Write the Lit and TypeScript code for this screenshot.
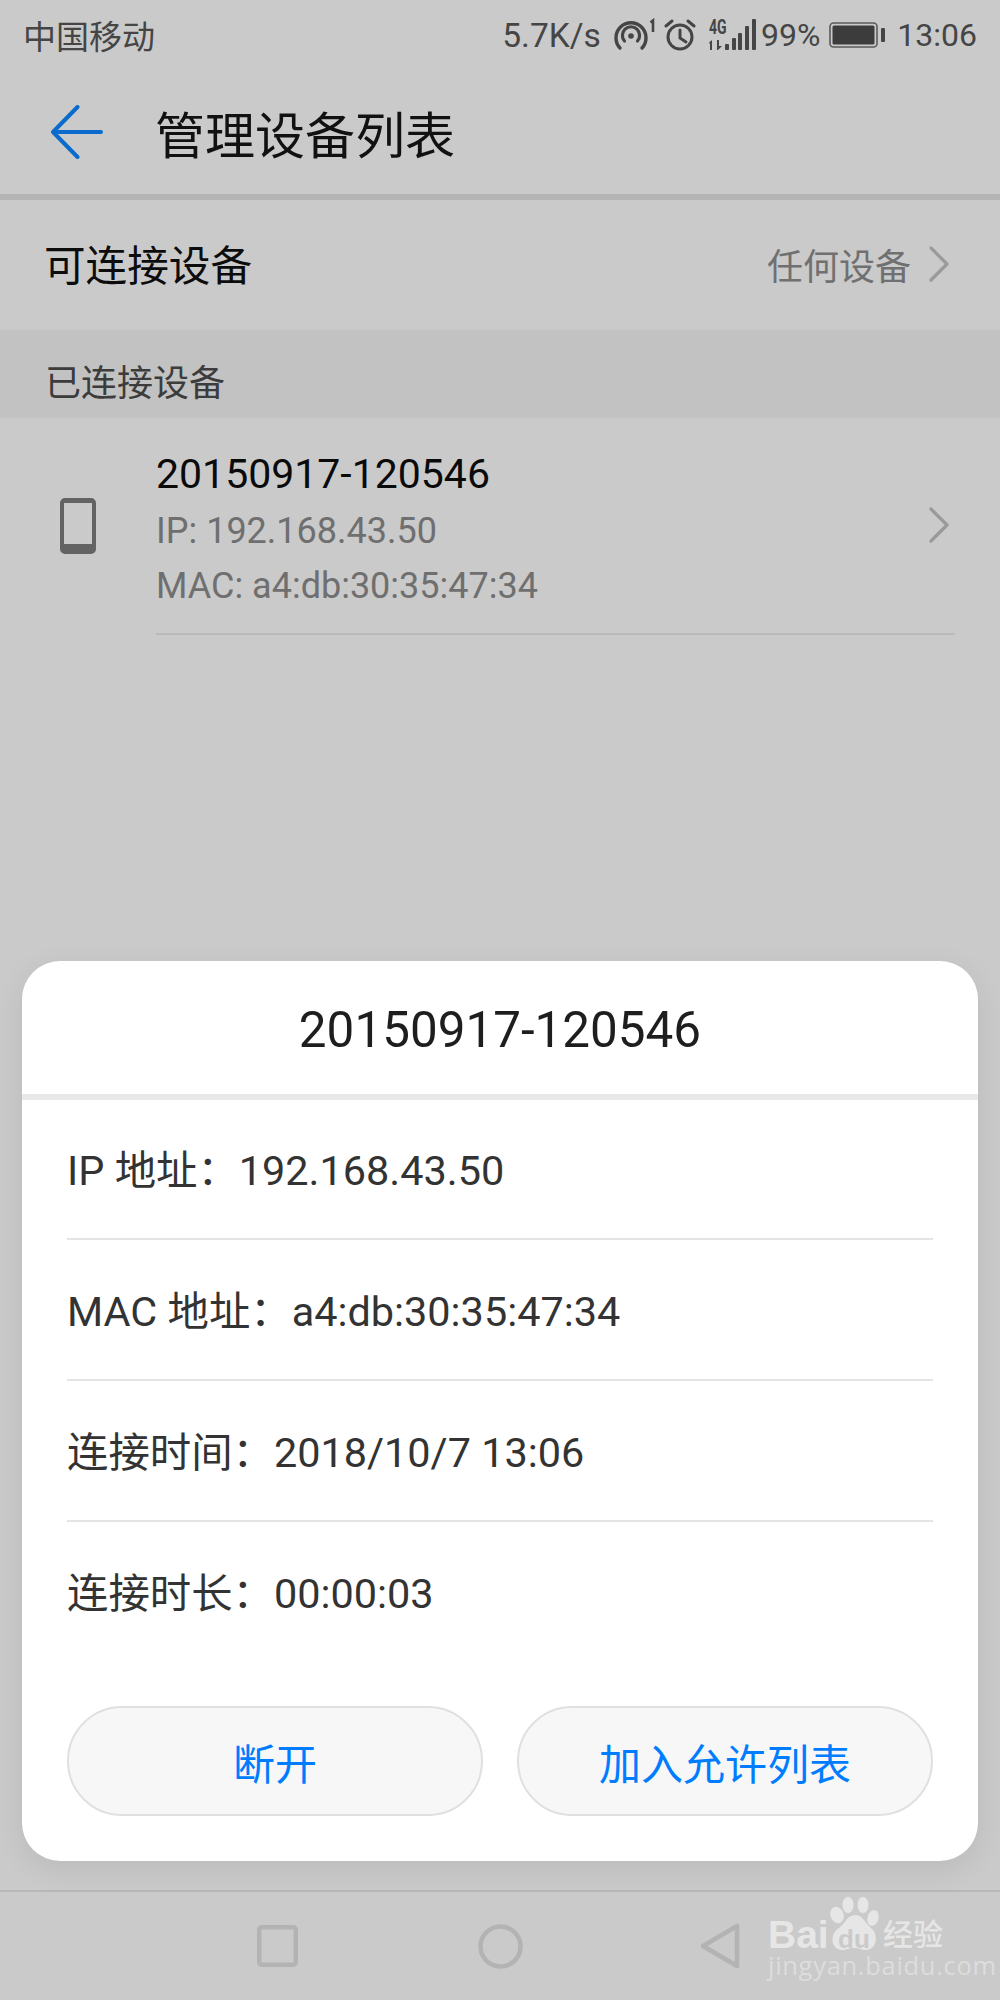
import { LitElement, html, css } from "lit";
import { customElement } from "lit/decorators.js";

@customElement("app-root")
export class AppRoot extends LitElement {
  static styles = css`
    :host { display: block; }
    * { box-sizing: border-box; }
    .page { position: relative; width: 1000px; height: 2000px; background: #cacaca; overflow: hidden; display: flex; flex-direction: column; font-family: Roboto, "Noto Sans CJK SC", sans-serif; color: #111; }
    svg { display: block; flex: none; }
    .status { height: 70px; display: flex; align-items: center; padding: 0 23px 0 23px; font-size: 32px; color: #454545; }
    .carrier { font-size: 33px; flex: 1; }
    .speed { font-size: 33.5px; margin-right: 12px; }
    .hot { margin-right: 7px; }
    .alarm { margin-right: 11px; }
    .net { position: relative; width: 50px; height: 34px; margin-right: 4px; }
    .g4 { position: absolute; left: 2px; top: 0; font-size: 20px; font-weight: 700; line-height: 18px; transform: scaleX(.7); transform-origin: left top; }
    .net svg { position: absolute; left: 0; top: 0; }
    .pct { margin-right: 9px; }
    .batt { margin-right: 11px; }
    .bar { height: 124px; display: flex; align-items: center; padding-left: 51px; gap: 50px; font-size: 50px; }
    .bar-rule { height: 6px; background: #b5b5b5; }
    .any { height: 130px; display: flex; align-items: center; padding: 0 51px 0 44px; font-size: 41.6px; color: #0c0c0c; }
    .any .lbl { flex: 1; position: relative; top: -2px; }
    .any .val { font-size: 36px; color: #707070; margin-right: 18px; position: relative; top: -1px; }
    .any svg { position: relative; top: -1px; }
    .band { height: 88px; background: #c2c2c2; display: flex; align-items: flex-end; padding: 0 0 12px 45px; font-size: 36px; line-height: 44px; color: #3c3c3c; }
    .dev { height: 217px; display: flex; align-items: center; padding-left: 60px; position: relative; }
    .dev-ph { margin-top: -2px; margin-right: 60px; }
    .dev-body { flex: 1; align-self: stretch; margin-right: 45px; border-bottom: 2px solid #bababa; padding-top: 32px; display: flex; align-items: stretch; }
    .dev-txt { flex: 1; }
    .dev-name { font-size: 41px; line-height: 48px; color: #0a0a0a; }
    .dev-sub { font-size: 36px; line-height: 55px; color: #6f6f6f; }
    .dev-sub.first { margin-top: 6px; }
    .dev-chev { align-self: center; margin-right: 6px; margin-top: -34px; }
    .spacer { flex: 1; }
    .nav { height: 110px; border-top: 2px solid #b8b8b8; display: flex; align-items: center; }
    .nav-sq { margin-left: 257px; }
    .nav-ci { margin-left: 180px; }
    .nav-tr { margin-left: 177px; }
    .dialog { position: absolute; left: 22px; top: 961px; width: 956px; height: 900px; background: #fff; border-radius: 38px; box-shadow: 0 8px 30px rgba(0,0,0,.08); display: flex; flex-direction: column; }
    .d-title { height: 133px; display: flex; align-items: center; justify-content: center; font-size: 49.4px; color: #1e1e1e; padding-top: 4px; }
    .d-rule { height: 6px; background: #e8e8e8; }
    .d-list { padding: 0 45px; }
    .d-row { height: 141px; display: flex; align-items: center; font-size: 41.4px; color: #333; border-bottom: 2px solid #e4e4e4; padding-bottom: 4px; }
    .d-row:first-child { height: 140px; padding-bottom: 5px; }
    .d-row:last-child { border-bottom: 0; padding-bottom: 6px; }
    .d-btns { display: flex; gap: 34px; padding: 43px 45px 0 45px; }
    .d-btn { flex: 1; height: 110px; border-radius: 55px; background: #f7f7f7; border: 2px solid #e0e0e0; color: #007dff; font-size: 42px; display: flex; align-items: center; justify-content: center; }
    .mark { position: absolute; left: 768px; top: 1892px; width: 190px; height: 96px; color: #e6e6e6; }
    .mk-bai { position: absolute; left: 0; top: 28px; font-family: "Liberation Sans", sans-serif; font-weight: 700; font-size: 39px; line-height: 30px; }
    .mk-du { position: absolute; left: 70px; top: 35px; font-family: "Liberation Sans", sans-serif; font-weight: 700; font-size: 26px; line-height: 24px; color: #cacaca; }
    .mk-jy { position: absolute; left: 115px; top: 28px; font-size: 30px; line-height: 30px; font-weight: 500; white-space: nowrap; }
    .mk-url { position: absolute; left: 0; top: 61px; font-family: "Open Sans", sans-serif; font-size: 25.5px; line-height: 24px; letter-spacing: .7px; color: #dddddd; white-space: nowrap; }
    .paw { position: absolute; left: 62px; top: 3px; }
  `;

  private chevron() {
    return html`<svg width="20" height="36" viewBox="0 0 20 36" fill="none" stroke="#9a9a9a" stroke-width="3.2" stroke-linecap="round" stroke-linejoin="round"><path d="M2 2 L18 18 L2 34" /></svg>`;
  }

  render() {
    return html`<div class="page">
      <div class="status">
        <span class="carrier">中国移动</span>
        <span class="speed">5.7K/s</span>
        <svg class="hot" width="44" height="34" viewBox="0 0 44 34" fill="none" stroke="#454545" stroke-linecap="round">
          <path d="M7 30 A15 15 0 1 1 29 30" stroke-width="3.4" />
          <path d="M11.5 23 A8.6 8.6 0 1 1 24.5 23" stroke-width="3.2" />
          <circle cx="18" cy="18" r="2.8" fill="#454545" stroke="none" />
          <path d="M37.5 4.5 L40 2.5 V14" stroke-width="2.6" stroke-linecap="butt" />
        </svg>
        <svg class="alarm" width="32" height="32" viewBox="0 0 32 32" fill="none" stroke="#454545" stroke-width="3" stroke-linecap="round" stroke-linejoin="round">
          <circle cx="16" cy="18" r="12" />
          <path d="M16 11 V19 L22 23" />
          <path d="M2 7 L8 2 M30 7 L24 2" />
        </svg>
        <div class="net">
          <svg width="50" height="34" viewBox="0 0 50 34" fill="#454545">
            <path d="M2 24.5 L5 22 V32 H3 V26 Z M10 22 H12 V28 H15 L11 32 H10 Z" />
            <rect x="18" y="26" width="4" height="6" rx="1" />
            <rect x="25" y="20" width="4" height="12" rx="1" />
            <rect x="31" y="15" width="4" height="17" rx="1" />
            <rect x="38" y="8" width="4" height="24" rx="1" />
            <rect x="45" y="1" width="4" height="31" rx="1" />
          </svg>
          <span class="g4">4G</span>
        </div>
        <span class="pct">99%</span>
        <svg class="batt" width="57" height="26" viewBox="0 0 57 26" fill="#454545">
          <rect x="1" y="1" width="47" height="24" rx="3.5" fill="none" stroke="#5a5a5a" stroke-width="1.6" />
          <rect x="3.5" y="3.5" width="42" height="19" rx="1.5" fill="#3c3c3c" />
          <rect x="52" y="6" width="4" height="14" rx="1" />
        </svg>
        <span>13:06</span>
      </div>
      <div class="bar">
        <svg width="54" height="54" viewBox="0 0 54 54" fill="none" stroke="#0a6bcc" stroke-width="4" stroke-linecap="round" stroke-linejoin="round"><path d="M2 27 H50 M26.5 2 L2 27 L26.5 52" /></svg>
        <span>管理设备列表</span>
      </div>
      <div class="bar-rule"></div>
      <div class="any">
        <span class="lbl">可连接设备</span>
        <span class="val">任何设备</span>
        ${this.chevron()}
      </div>
      <div class="band">已连接设备</div>
      <div class="dev">
        <svg class="dev-ph" width="36" height="56" viewBox="0 0 36 56"><path fill="#636363" fill-rule="evenodd" d="M5 0 H31 A5 5 0 0 1 36 5 V51 A5 5 0 0 1 31 56 H5 A5 5 0 0 1 0 51 V5 A5 5 0 0 1 5 0 Z M4 5 V46 H32 V5 Z" /></svg>
        <div class="dev-body">
          <div class="dev-txt">
            <div class="dev-name">20150917-120546</div>
            <div class="dev-sub first">IP: 192.168.43.50</div>
            <div class="dev-sub">MAC: a4:db:30:35:47:34</div>
          </div>
          <span class="dev-chev">${this.chevron()}</span>
        </div>
      </div>
      <div class="spacer"></div>
      <div class="nav">
        <svg class="nav-sq" width="41" height="42" viewBox="0 0 41 42" fill="none" stroke="#b3b3b3" stroke-width="4.5"><rect x="2.25" y="2.25" width="36.5" height="37.5" rx="2.5" /></svg>
        <svg class="nav-ci" width="45" height="45" viewBox="0 0 45 45" fill="none" stroke="#b3b3b3" stroke-width="4.5"><circle cx="22.5" cy="22.5" r="20" /></svg>
        <svg class="nav-tr" width="40" height="46" viewBox="0 0 40 46" fill="none" stroke="#b3b3b3" stroke-width="4.5" stroke-linejoin="round"><path d="M37 3 V43 L3 23 Z" /></svg>
      </div>
      <div class="mark">
        <svg class="paw" width="52" height="60" viewBox="0 0 52 60" fill="#e6e6e6">
          <ellipse cx="7" cy="20" rx="6.5" ry="8.5" transform="rotate(-20 7 20)" />
          <ellipse cx="18" cy="10" rx="5.5" ry="8" />
          <ellipse cx="33" cy="10" rx="5.5" ry="8" />
          <ellipse cx="43" cy="23" rx="5.5" ry="8" transform="rotate(15 43 23)" />
          <path d="M25 20 C33 20 35 28 41 33 C49 39 47 55 36 55 C31 55 30 53 24 53 C18 53 17 55 12 55 C1 55 -1 39 9 33 C15 29 17 20 25 20 Z" />
        </svg>
        <span class="mk-bai">Bai</span>
        <span class="mk-du">du</span>
        <span class="mk-jy">经验</span>
        <span class="mk-url">jingyan.baidu.com</span>
      </div>
      <div class="dialog">
        <div class="d-title">20150917-120546</div>
        <div class="d-rule"></div>
        <div class="d-list">
          <div class="d-row">IP 地址：192.168.43.50</div>
          <div class="d-row">MAC 地址：a4:db:30:35:47:34</div>
          <div class="d-row">连接时间：2018/10/7 13:06</div>
          <div class="d-row">连接时长：00:00:03</div>
        </div>
        <div class="d-btns">
          <div class="d-btn">断开</div>
          <div class="d-btn">加入允许列表</div>
        </div>
      </div>
    </div>`;
  }
}
